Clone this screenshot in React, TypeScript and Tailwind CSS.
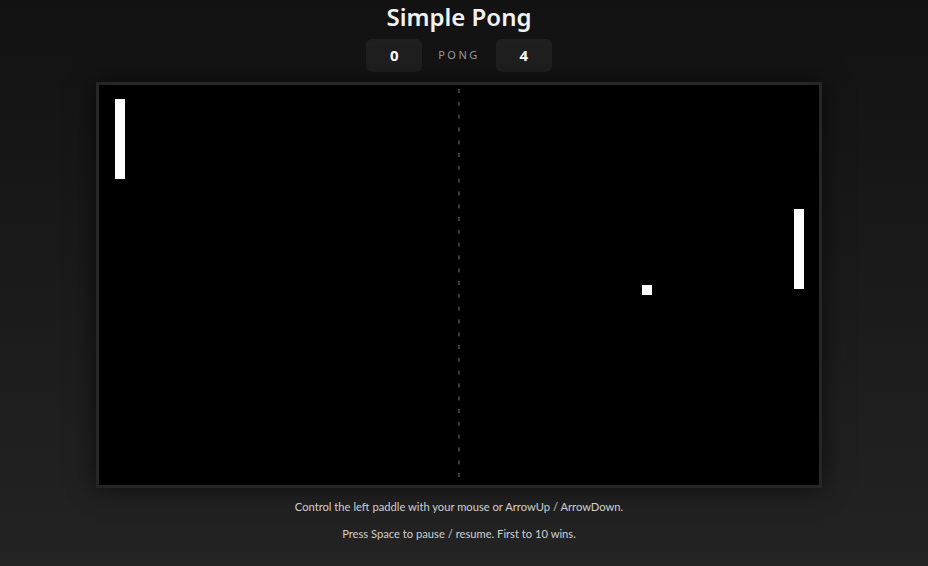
import React from "react";

const W = 720;
const H = 400;

function Court() {
  return (
    <svg width={W} height={H} viewBox={`0 0 ${W} ${H}`} className="block">
      <rect x={0} y={0} width={W} height={H} fill="#000" />
      <line
        x1={360}
        y1={4}
        x2={360}
        y2={H}
        stroke="#3a3a3a"
        strokeWidth={2}
        strokeDasharray="4 8.8"
      />
      {/* left paddle */}
      <rect x={16} y={14} width={10} height={80} fill="#fff" />
      {/* right paddle */}
      <rect x={695} y={124} width={10} height={80} fill="#fff" />
      {/* ball */}
      <rect x={543} y={200} width={10} height={10} fill="#fff" />
    </svg>
  );
}

function ScoreBox({ value }: { value: number }) {
  return (
    <div className="w-[56px] h-[33px] rounded-md bg-[#1f1f1f] flex items-center justify-center text-[15px] font-bold text-white">
      {value}
    </div>
  );
}

export default function App() {
  return (
    <div
      className="min-h-screen h-[566px] bg-gradient-to-b from-[#121212] to-[#232323] flex flex-col items-center pr-[10px] text-white"
      style={{ fontFamily: '"Noto Sans", "Open Sans", sans-serif' }}
    >
      <h1 className="text-[24px] leading-[34px] font-semibold text-[#f2f2f2]">
        Simple Pong
      </h1>

      <div className="mt-[5px] flex items-center gap-[16px]">
        <ScoreBox value={0} />
        <span className="text-[11px] tracking-[2.5px] text-[#9a9a9a]">PONG</span>
        <ScoreBox value={4} />
      </div>

      <div className="mt-[10px] border-[3px] border-[#262626] shadow-[0_0_24px_rgba(0,0,0,0.6)]">
        <Court />
      </div>

      <div
        className="flex flex-col items-center"
        style={{ fontFamily: 'Lato, "Noto Sans", sans-serif' }}
      >
        <p className="mt-[11px] text-[11.2px] leading-4 text-[#cfcfcf]">
          Control the left paddle with your mouse or ArrowUp / ArrowDown.
        </p>
        <p className="mt-[11px] text-[11.2px] leading-4 text-[#cfcfcf]">
          Press Space to pause / resume. First to 10 wins.
        </p>
      </div>
    </div>
  );
}
